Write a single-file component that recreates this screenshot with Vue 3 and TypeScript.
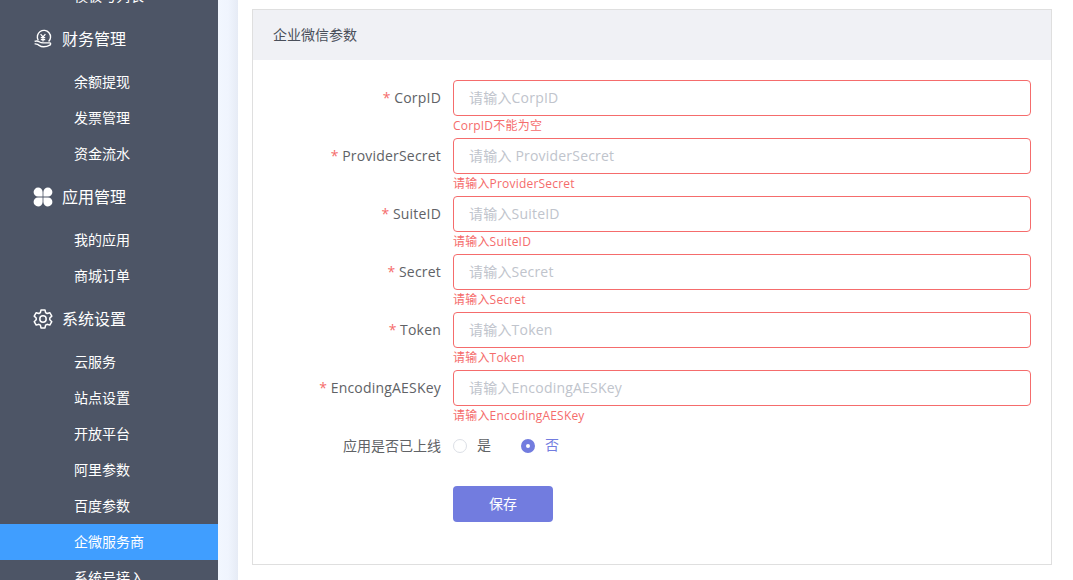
<script setup lang="ts">
interface Group { title: string; icon: string; subs: string[] }
const leading = '模板与列表'
const groups: Group[] = [
  { title: '财务管理', icon: 'money', subs: ['余额提现', '发票管理', '资金流水'] },
  { title: '应用管理', icon: 'flower', subs: ['我的应用', '商城订单'] },
  { title: '系统设置', icon: 'gear', subs: ['云服务', '站点设置', '开放平台', '阿里参数', '百度参数', '企微服务商', '系统号接入'] },
]
const active = '企微服务商'
interface Field { label: string; placeholder: string; error: string }
const fields: Field[] = [
  { label: 'CorpID', placeholder: '请输入CorpID', error: 'CorpID不能为空' },
  { label: 'ProviderSecret', placeholder: '请输入 ProviderSecret', error: '请输入ProviderSecret' },
  { label: 'SuiteID', placeholder: '请输入SuiteID', error: '请输入SuiteID' },
  { label: 'Secret', placeholder: '请输入Secret', error: '请输入Secret' },
  { label: 'Token', placeholder: '请输入Token', error: '请输入Token' },
  { label: 'EncodingAESKey', placeholder: '请输入EncodingAESKey', error: '请输入EncodingAESKey' },
]
</script>

<template>
  <div class="page">
    <aside class="sidebar">
      <div class="list">
        <div class="sub">{{ leading }}</div>
        <template v-for="g in groups" :key="g.title">
          <div class="head">
            <span class="icon">
              <svg v-if="g.icon === 'money'" width="20" height="20" viewBox="0 0 20 20" fill="none" stroke="#fff" stroke-width="1.4">
                <path d="M5.2 11.2A6.6 6.6 0 1 1 15.6 12.6" />
                <path d="M7.6 5.2 10 8l2.4-2.8M10 8v4.4M7.8 8.6h4.4M7.8 10.6h4.4" stroke-width="1.2" />
                <path d="M1.6 12.4c2-.8 3.4-.6 5 .6 1 .7 2.4.9 3.6.9h6.8c.8 0 .8 1.8-.2 2.3-1.4.8-3.8 1.6-6.2 1.6-3 0-4.400-1.500-6-2.400-1.200-.6-2-.6-3-.5" stroke-linejoin="round" />
              </svg>
              <svg v-else-if="g.icon === 'flower'" width="20" height="20" viewBox="0 0 20 20" fill="#fff">
                <path d="M9.600 9.600H5A4.500 4.500 0 1 1 9.600 5Z" />
                <path d="M10.400 9.600V5A4.500 4.500 0 1 1 15 9.600Z" />
                <path d="M9.600 10.400V15A4.500 4.500 0 1 1 5 10.400Z" />
                <path d="M10.400 10.400H15A4.500 4.500 0 1 1 10.400 15Z" />
              </svg>
              <svg v-else width="20" height="20" viewBox="0 0 20 20" fill="none" stroke="#fff" stroke-width="1.5" stroke-linejoin="round">
                <circle cx="10" cy="10" r="3.200" />
                <path d="M8 .9h4l.6 2.700 1.500.9 2.700-.8 2 3.400-2 1.900v1.800l2 1.900-2 3.400-2.700-.8-1.500.9-.6 2.700H8l-.6-2.700-1.500-.9-2.700.8-2-3.400 2-1.900V9l-2-1.900 2-3.400 2.700.8 1.500-.9Z" />
              </svg>
            </span>
            <span class="head-text">{{ g.title }}</span>
          </div>
          <div v-for="s in g.subs" :key="s" class="sub" :class="{ on: s === active }">{{ s }}</div>
        </template>
      </div>
    </aside>
    <div class="shade"></div>
    <main class="main">
      <section class="card">
        <header class="card-head">企业微信参数</header>
        <form class="form" @submit.prevent>
          <div v-for="f in fields" :key="f.label" class="row">
            <label class="label"><i>*</i> <span class="latin">{{ f.label }}</span></label>
            <div class="control">
              <input class="input" type="text" :placeholder="f.placeholder" />
              <div class="error">{{ f.error }}</div>
            </div>
          </div>
          <div class="row">
            <label class="label">应用是否已上线</label>
            <div class="control radios">
              <span class="radio"><span class="dot"></span><span class="radio-text">是</span></span>
              <span class="radio checked"><span class="dot"></span><span class="radio-text">否</span></span>
            </div>
          </div>
          <div class="row actions">
            <span></span>
            <button class="save" type="button">保存</button>
          </div>
        </form>
      </section>
    </main>
  </div>
</template>

<style>
html, body { margin: 0; padding: 0; overflow: hidden; background: #fff; }
</style>

<style scoped>
.page {
  display: flex;
  width: 1073px;
  height: 580px;
  overflow: hidden;
  font-family: "Open Sans", "Noto Sans CJK SC", sans-serif;
  font-size: 14px;
  color: #606266;
}
.sidebar {
  width: 218px;
  flex: none;
  background: #4d5566;
  color: #fff;
  overflow: hidden;
}
.list { margin-top: -22px; }
.head {
  display: flex;
  align-items: center;
  height: 50px;
  padding-left: 33px;
  font-size: 16px;
  gap: 9px;
}
.head-text { line-height: 20px; padding-bottom: 1px; }
.icon { width: 20px; height: 20px; display: flex; }
.sub {
  height: 36px;
  line-height: 36px;
  padding-left: 74px;
}
.sub.on { background: #409eff; }
.shade {
  width: 20px;
  flex: none;
  background: linear-gradient(to right, #f2f7ff 0, #f0f5fe 50%, #e6ebf5 100%);
}
.main { flex: 1; padding: 9px 21px 0 14px; min-width: 0; }
.card { border: 1px solid #dfdfdf; }
.card-head {
  height: 50px;
  line-height: 50px;
  padding-left: 20px;
  background: #f0f1f5;
  color: #4a4f5a;
}
.form { padding: 20px 20px 42px 0; }
.row { display: grid; grid-template-columns: 200px 1fr; }
.label {
  text-align: right;
  padding-right: 12px;
  height: 36px;
  line-height: 36px;
}
.label i { font-style: normal; color: #f56c6c; }
.latin { letter-spacing: .2px; }
.input {
  display: block;
  box-sizing: border-box;
  width: 100%;
  height: 36px;
  padding: 0 15px 2px 15px;
  border: 1px solid #f56c6c;
  border-radius: 4px;
  outline: none;
  font: inherit;
  letter-spacing: .2px;
  color: #606266;
  background: #fff;
}
.input::placeholder { color: #c0c4cc; }
.error {
  height: 22px;
  line-height: 20px;
  font-size: 12px;
  letter-spacing: .2px;
  color: #f56c6c;
}
.radios { display: flex; align-items: center; height: 36px; gap: 30px; margin-bottom: 22px; }
.radio { display: inline-flex; align-items: center; gap: 10px; }
.radio-text { line-height: 20px; padding-bottom: 2px; }
.dot {
  box-sizing: border-box;
  width: 14px;
  height: 14px;
  border: 1px solid #dcdfe6;
  border-radius: 50%;
  background: #fff;
}
.checked { color: #727cdf; }
.checked .dot { border: 5px solid #727cdf; }
.save {
  width: 100px;
  height: 36px;
  border: 0;
  border-radius: 4px;
  background: #727cdf;
  color: #fff;
  font: inherit;
  padding: 0 0 2px;
}
</style>
